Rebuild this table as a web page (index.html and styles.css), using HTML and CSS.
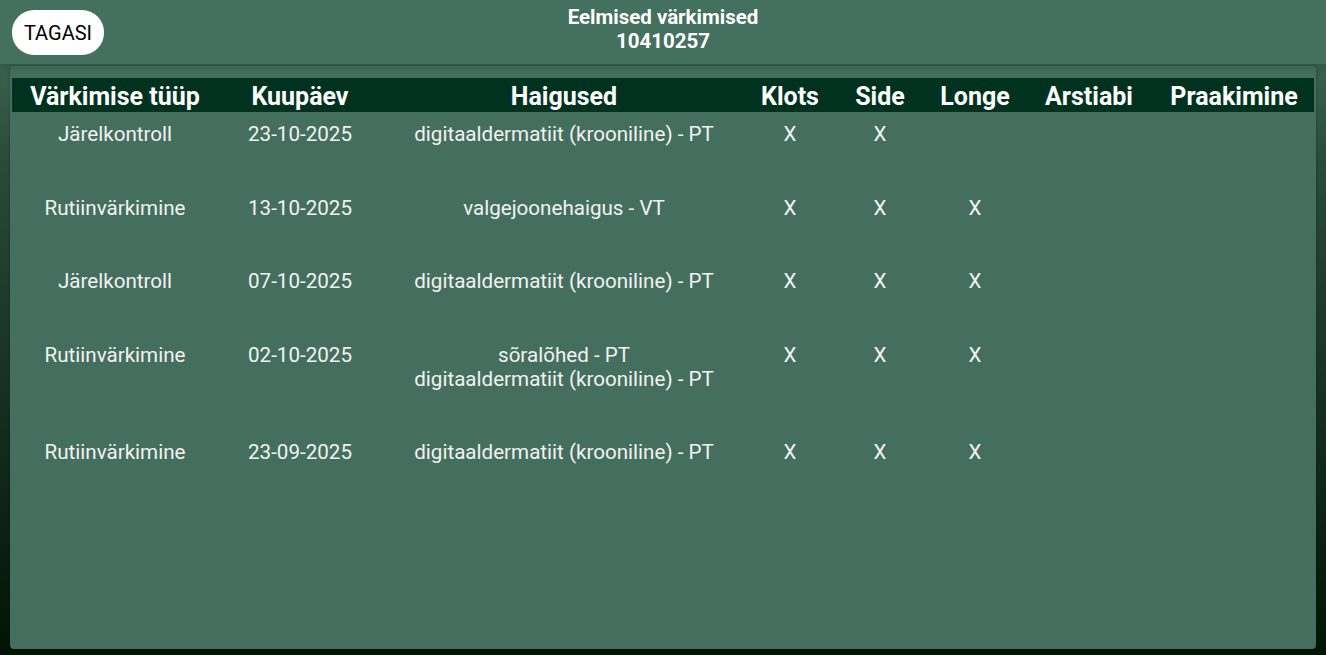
FILE: index.html
```html
<!DOCTYPE html>
<html lang="et">
<head>
<meta charset="utf-8">
<title>Eelmised värkimised</title>
<link rel="stylesheet" href="styles.css">
</head>
<body>
<header class="topbar">
  <button class="back-btn">TAGASI</button>
  <div class="title">
    <div>Eelmised värkimised</div>
    <div>10410257</div>
  </div>
</header>
<main class="panel">
  <table class="grid">
    <colgroup>
      <col class="c1"><col class="c2"><col class="c3"><col class="c4"><col class="c5"><col class="c6"><col class="c7"><col class="c8">
    </colgroup>
    <thead>
      <tr>
        <th>Värkimise tüüp</th><th>Kuupäev</th><th>Haigused</th><th>Klots</th><th>Side</th><th>Longe</th><th>Arstiabi</th><th>Praakimine</th>
      </tr>
    </thead>
    <tbody>
      <tr><td>Järelkontroll</td><td>23-10-2025</td><td>digitaaldermatiit (krooniline) - PT</td><td>X</td><td>X</td><td></td><td></td><td></td></tr>
      <tr><td>Rutiinvärkimine</td><td>13-10-2025</td><td>valgejoonehaigus - VT</td><td>X</td><td>X</td><td>X</td><td></td><td></td></tr>
      <tr><td>Järelkontroll</td><td>07-10-2025</td><td>digitaaldermatiit (krooniline) - PT</td><td>X</td><td>X</td><td>X</td><td></td><td></td></tr>
      <tr><td>Rutiinvärkimine</td><td>02-10-2025</td><td>sõralõhed - PT<br>digitaaldermatiit (krooniline) - PT</td><td>X</td><td>X</td><td>X</td><td></td><td></td></tr>
      <tr><td>Rutiinvärkimine</td><td>23-09-2025</td><td>digitaaldermatiit (krooniline) - PT</td><td>X</td><td>X</td><td>X</td><td></td><td></td></tr>
    </tbody>
  </table>
</main>
</body>
</html>
```
FILE: styles.css
```css
* { box-sizing: border-box; }
html, body { height: 100%; }
body {
  margin: 0;
  font-family: Roboto, "Liberation Sans", sans-serif;
  color: #f2f2f2;
  background: linear-gradient(to bottom, #44705f 0%, #2a4a3b 25%, #193328 55%, #021405 100%);
  display: flex;
  flex-direction: column;
  overflow: hidden;
}
.topbar {
  height: 64px;
  flex: none;
  background: #44705f;
  box-shadow: 0 3px 10px rgba(0, 0, 0, 0.18);
  display: flex;
  align-items: flex-start;
  position: relative;
  z-index: 1;
}
.back-btn {
  margin: 10px 0 0 12px;
  width: 92px;
  height: 45px;
  border: none;
  border-radius: 22px;
  background: #ffffff;
  color: #000;
  font-family: Roboto, "Liberation Sans", sans-serif;
  font-size: 20px;
  padding: 0;
}
.title {
  position: absolute;
  left: 0;
  right: 0;
  top: 5px;
  text-align: center;
  font-weight: 700;
  font-size: 20.5px;
  line-height: 24px;
  color: #fff;
  pointer-events: none;
}
.panel {
  margin: 2px 10px 6px;
  flex: 1;
  background: #446f5f;
  border-radius: 4px;
  padding: 12px 2px;
  box-shadow: 0 1px 3px rgba(0, 0, 0, 0.3);
}
.grid {
  width: 1302px;
  border-collapse: collapse;
  table-layout: fixed;
}
.c1 { width: 206px; }
.c2 { width: 164px; }
.c3 { width: 364px; }
.c4 { width: 88px; }
.c5 { width: 92px; }
.c6 { width: 98px; }
.c7 { width: 130px; }
.c8 { width: 160px; }
.grid thead th {
  background: #01321f;
  color: #fff;
  font-weight: 700;
  font-size: 25px;
  height: 34px;
  padding: 3px 0 0;
  line-height: 31px;
  white-space: nowrap;
}
.grid tbody td {
  text-align: center;
  vertical-align: top;
  font-size: 20.6px;
  line-height: 24px;
  padding: 10px 0 39.5px;
  color: #f2f2f2;
}
```
